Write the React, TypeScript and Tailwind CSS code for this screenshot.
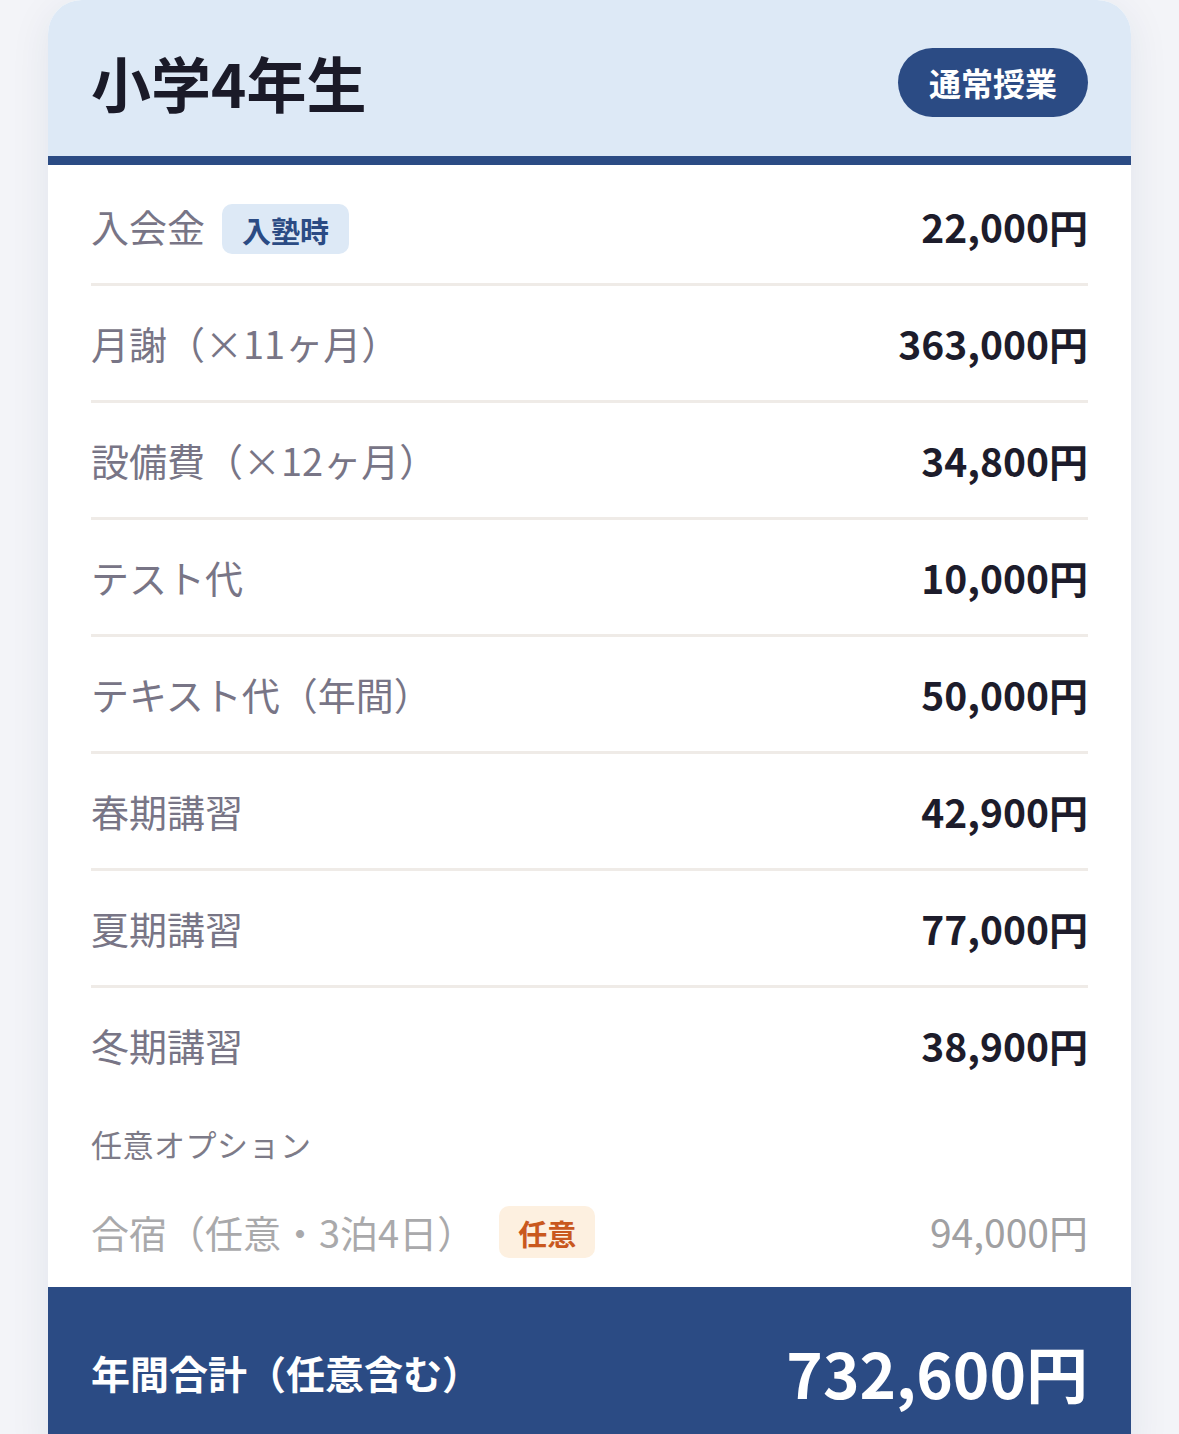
import React from "react";

const rows: { label: string; amount: string; badge?: string }[] = [
  { label: "入会金", amount: "22,000円", badge: "入塾時" },
  { label: "月謝（×11ヶ月）", amount: "363,000円" },
  { label: "設備費（×12ヶ月）", amount: "34,800円" },
  { label: "テスト代", amount: "10,000円" },
  { label: "テキスト代（年間）", amount: "50,000円" },
  { label: "春期講習", amount: "42,900円" },
  { label: "夏期講習", amount: "77,000円" },
  { label: "冬期講習", amount: "38,900円" },
];

export default function App() {
  return (
    <div
      className="min-h-screen bg-[#f3f4f8] px-[48px]"
      style={{ fontFamily: '"Noto Sans CJK JP", "Noto Sans", sans-serif' }}
    >
      <div className="overflow-hidden rounded-t-[34px] bg-white shadow-[0_8px_40px_rgba(30,45,90,0.08)]">
        <div className="flex h-[156px] items-center justify-between bg-[#dde9f6] px-[43px] pt-[8px]">
          <h1 className="text-[60px] font-bold leading-none text-[#1a1a28]">小学4年生</h1>
          <span className="flex h-[69px] items-center rounded-full bg-[#2b4b84] px-[31px] text-[32px] font-bold leading-none text-white">
            通常授業
          </span>
        </div>
        <div className="h-[9px] bg-[#2b4b84]" />
        <div className="px-[43px] pt-[4px]">
          {rows.map((r, i) => (
            <div
              key={r.label}
              className={
                i < rows.length - 1
                  ? "flex h-[117px] items-center justify-between border-b-[3px] border-[#efebe7]"
                  : "flex h-[114px] items-center justify-between"
              }
            >
              <div className="flex items-center gap-[17px]">
                <span className="text-[38px] leading-none text-[#787586]">{r.label}</span>
                {r.badge && (
                  <span className="mt-[5px] flex h-[50px] items-center rounded-[10px] bg-[#dde9f6] px-[20px] pt-[4px] text-[29px] font-bold leading-none text-[#2b4b84]">
                    {r.badge}
                  </span>
                )}
              </div>
              <span className="text-[39px] font-bold leading-none text-[#1d1c2b]">{r.amount}</span>
            </div>
          ))}
          <div className="pt-[18px]">
            <div className="flex h-[46px] items-center text-[31px] leading-none tracking-[0.5px] text-[#7d7b88]">
              任意オプション
            </div>
          </div>
          <div className="flex h-[121px] items-center justify-between pt-[10px]">
            <div className="flex items-center gap-[24px]">
              <span className="text-[38px] leading-none text-[#a9a9ab]">合宿（任意・3泊4日）</span>
              <span className="flex h-[52px] items-center rounded-[10px] bg-[#fdf0e0] px-[19px] pt-[4px] text-[29px] font-bold leading-none text-[#c9581e]">
                任意
              </span>
            </div>
            <span className="text-[39px] leading-none text-[#a0a0a2]">94,000円</span>
          </div>
        </div>
        <div className="flex h-[170px] items-center justify-between bg-[#2b4b84] px-[43px]">
          <span className="text-[39px] font-bold leading-none text-white">年間合計（任意含む）</span>
          <span className="text-[62px] font-bold leading-none text-white">732,600円</span>
        </div>
      </div>
    </div>
  );
}
